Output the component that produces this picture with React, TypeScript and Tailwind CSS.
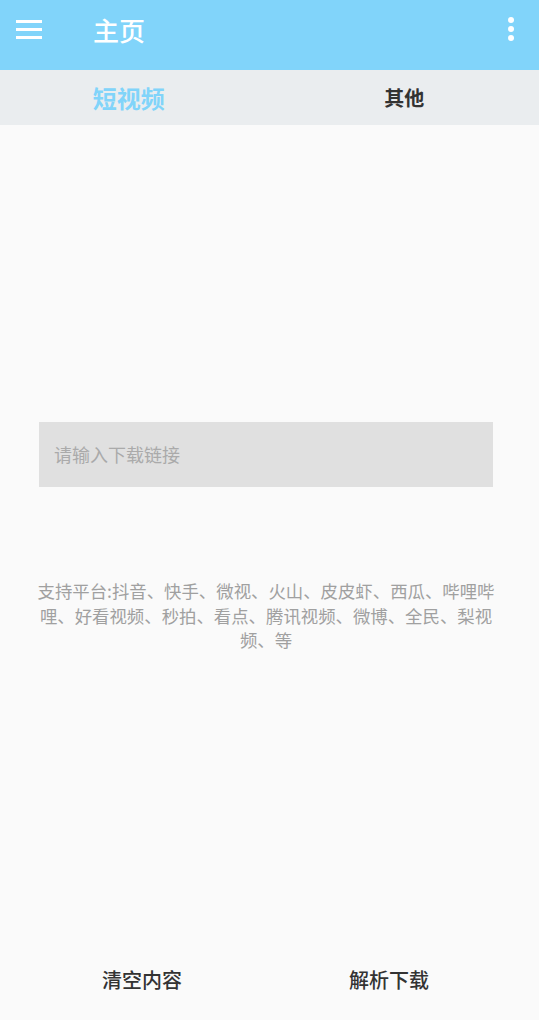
import React from "react";

const font = { fontFamily: '"Noto Sans CJK SC", "Noto Sans", sans-serif' };

export default function App() {
  return (
    <div className="flex h-[1020px] w-[539px] flex-col bg-[#fafafa]" style={font}>
      {/* toolbar */}
      <div className="flex h-[70px] items-center bg-[#81d4fa] pb-[12px] shadow-sm">
        <div className="ml-[16px] flex w-[26px] flex-col gap-[5px]">
          <span className="h-[3px] bg-white" />
          <span className="h-[3px] bg-white" />
          <span className="h-[3px] bg-white" />
        </div>
        <div className="ml-[51px] text-[26px] font-medium text-white">主页</div>
        <div className="ml-auto mr-[25px] flex flex-col items-center gap-[3px]">
          <span className="h-[6px] w-[6px] rounded-full bg-white" />
          <span className="h-[6px] w-[6px] rounded-full bg-white" />
          <span className="h-[6px] w-[6px] rounded-full bg-white" />
        </div>
      </div>

      {/* tabs */}
      <div className="grid h-[55px] grid-cols-2 items-center bg-[#eaedef]">
        <div className="pr-[12px] text-center text-[24px] font-bold text-[#81d4fa]">短视频</div>
        <div className="text-center text-[20px] font-bold text-[#333]">其他</div>
      </div>

      {/* content */}
      <div className="flex flex-1 flex-col pl-[39px] pr-[46px]">
        <div className="mt-[297px] flex h-[65px] items-center bg-[#e0e0e0] px-[15px] text-[18px] text-[#aaaaaa]">
          请输入下载链接
        </div>
        <p className="-ml-[5px] mt-[92px] w-[464px] text-center text-[17.4px] leading-[24.5px] text-[#a0a0a0]">
          支持平台:抖音、快手、微视、火山、皮皮虾、西瓜、哔哩哔哩、好看视频、秒拍、看点、腾讯视频、微博、全民、梨视频、等
        </p>
      </div>

      {/* actions */}
      <div className="flex h-[80px] items-center pl-[42px]">
        <button className="w-[200px] text-center text-[20px] font-medium text-[#333]">清空内容</button>
        <button className="ml-[47px] w-[200px] text-center text-[20px] font-medium text-[#333]">解析下载</button>
      </div>
    </div>
  );
}
